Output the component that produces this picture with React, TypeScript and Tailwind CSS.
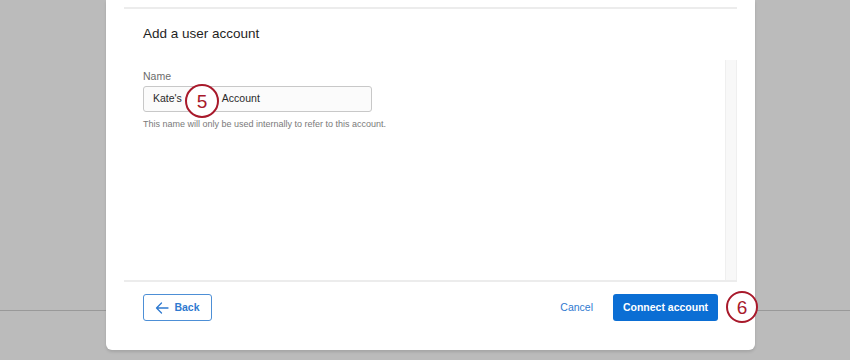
import React from 'react'

const StepBadge = ({ n, className }: { n: number; className: string }) => {
  return (
    <div
      className={`absolute flex items-center justify-center rounded-full border-[2.5px] border-[#a8192b] bg-white text-[19px] font-normal leading-none text-[#a8192b] ${className}`}
    >
      {n}
    </div>
  )
}

const App = () => {
  return (
    <div className="relative h-[360px] w-[850px] overflow-hidden bg-[#bbbbbb] font-['Liberation_Sans',Arial,sans-serif]">
      {/* page divider seen behind the dialog */}
      <div className="absolute left-0 right-0 top-[310px] h-px bg-[#999999]" />

      <div className="relative flex pl-[106px]">
        <div className="flex h-[350px] w-[649px] flex-col rounded-b-[6px] bg-white px-[18px] shadow-[0_2px_3px_rgba(0,0,0,0.12)]">
          <div className="mt-[7px] border-t-2 border-[#ececec]" />

          <div className="flex h-[51px] items-center pl-[19px] text-[13.5px] text-[#1f1f1f]">
            Add a user account
          </div>

          <div className="flex h-[222px] border-b-2 border-[#ececec]">
            <div className="flex-1 pl-[19px] pt-[9px]">
              <div className="text-[10.5px] leading-[14px] text-[#6b6b6b]">
                Name
              </div>
              <div className="relative mt-[3px] flex h-[26px] w-[229px] items-center rounded-[3px] border border-[#c8c8c8] bg-[#fbfbfb] pl-[9px] text-[10.5px] text-[#2a2a2a]">
                <span>Kate's</span>
                <span className="ml-[40px]">Account</span>
                <StepBadge n={5} className="left-[41px] top-[-3px] h-[34px] w-[34px]" />
              </div>
              <div className="mt-[6px] text-[9px] leading-[12px] text-[#7a7a7a]">
                This name will only be used internally to refer to this account.
              </div>
            </div>
            <div className="w-[12px] border-x border-[#efefef] bg-[#f8f8f8]" />
          </div>

          <div className="flex items-start justify-between pl-[19px] pr-[19px] pt-[12px]">
            <button className="flex h-[27px] w-[69px] items-center justify-center gap-[5px] rounded-[3px] border border-[#4d8fd6] text-[10.5px] font-bold text-[#2f7ad0]">
              <svg width="14" height="12" viewBox="0 0 14 12" fill="none">
                <path
                  d="M13 6H1.5M6.5 1L1.5 6l5 5"
                  stroke="#2f7ad0"
                  strokeWidth="1.3"
                  strokeLinecap="round"
                  strokeLinejoin="round"
                />
              </svg>
              Back
            </button>

            <div className="flex items-center gap-[20px]">
              <button className="text-[10.5px] text-[#2f7ad0]">Cancel</button>
              <button className="relative flex h-[27px] w-[105px] items-center justify-center rounded-[3px] bg-[#0b6ed4] text-[10.5px] font-bold text-white">
                Connect account
                <StepBadge n={6} className="left-[113px] top-[-3px] h-[32px] w-[32px]" />
              </button>
            </div>
          </div>
        </div>
      </div>
    </div>
  )
}

export default App
